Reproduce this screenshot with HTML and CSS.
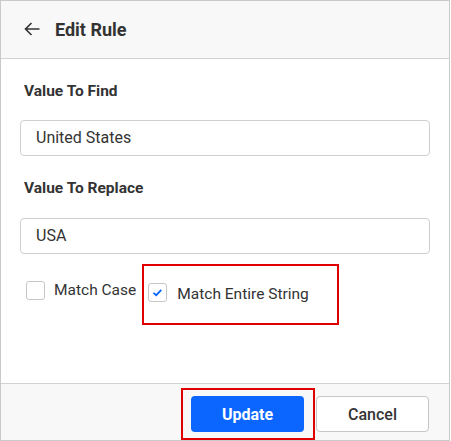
FILE: index.html
```html
<!DOCTYPE html>
<html>
<head>
<meta charset="utf-8">
<link rel="stylesheet" href="styles.css">
</head>
<body>
<div class="dialog">
  <div class="header">
    <svg class="back" width="16" height="14" viewBox="0 0 16 14"><path d="M15.5 7H1.5M7.5 1L1.5 7L7.5 13" fill="none" stroke="#333" stroke-width="1.6"/></svg>
    <span class="title">Edit Rule</span>
  </div>
  <div class="content">
    <div class="label">Value To Find</div>
    <div class="input">United States</div>
    <div class="label second">Value To Replace</div>
    <div class="input">USA</div>
    <div class="options">
      <div class="option first">
        <span class="box"></span>
        <span class="opt-text">Match Case</span>
      </div>
      <div class="option highlight">
        <span class="box"><svg width="17" height="17" viewBox="0 0 17 17"><path d="M4.5 8.8L7.2 11.2L12.3 5.8" fill="none" stroke="#0a66ff" stroke-width="1.8"/></svg></span>
        <span class="opt-text">Match Entire String</span>
      </div>
    </div>
  </div>
  <div class="footer">
    <div class="mark">
      <div class="btn primary">Update</div>
    </div>
    <div class="btn secondary">Cancel</div>
  </div>
</div>
</body>
</html>
```
FILE: styles.css
```css
html, body { margin: 0; padding: 0; background: #fff; }
body { font-family: Roboto, "Liberation Sans", sans-serif; color: #333; }
.dialog {
  width: 450px; height: 441px; box-sizing: border-box;
  border: 1px solid #c9c9c9;
  display: flex; flex-direction: column;
}
.header {
  height: 58px; box-sizing: border-box;
  border-bottom: 1px solid #d2d2d2;
  background: #f8f8f8;
  display: flex; align-items: center;
  padding-left: 23px; padding-bottom: 1px;
}
.back { display: block; }
.title { font-size: 18px; font-weight: 700; margin-left: 15px; color: #333; }
.content { flex: 1; padding: 22px 19px 0; }
.label { font-size: 15.5px; font-weight: 700; line-height: 20px; padding-left: 4px; margin-bottom: 19px; }
.label.second { margin-top: 22px; margin-bottom: 20px; }
.input {
  height: 36px; box-sizing: border-box;
  border: 1px solid #cfcfcf; border-radius: 4px;
  padding-left: 15px; font-size: 16px; line-height: 34px; color: #333;
}
.options { display: flex; align-items: flex-start; margin-top: 10px; }
.option { display: flex; align-items: center; }
.option.first { margin-left: 6px; margin-top: 16px; }
.box {
  width: 19px; height: 19px; box-sizing: border-box;
  border: 1px solid #c6c6c6; border-radius: 3px; background: #fff;
  display: flex; align-items: center; justify-content: center;
}
.opt-text { font-size: 15.5px; line-height: 20px; margin-left: 9px; }
.option.highlight {
  margin-left: 6px; border: 2px solid #e00000;
  padding: 15px 28px 19px 4px;
}
.option.highlight .opt-text { margin-left: 10px; margin-top: 3px; }
.footer {
  height: 57px; box-sizing: border-box;
  border-top: 1px solid #d2d2d2; background: #f8f8f8;
  display: flex; justify-content: flex-end; align-items: flex-end;
  padding-right: 20px;
}
.mark { border: 2px solid #e00000; padding: 6px 9px 6px 8px; }
.btn {
  width: 113px; height: 36px; box-sizing: border-box; border-radius: 4px;
  display: flex; align-items: center; justify-content: center; font-size: 16px;
}
.primary { background: #0a66ff; color: #fff; font-weight: 700; }
.secondary { background: #fff; border: 1px solid #c6c6c6; color: #333; font-weight: 500; margin-left: 1px; margin-bottom: 8px; }
```
